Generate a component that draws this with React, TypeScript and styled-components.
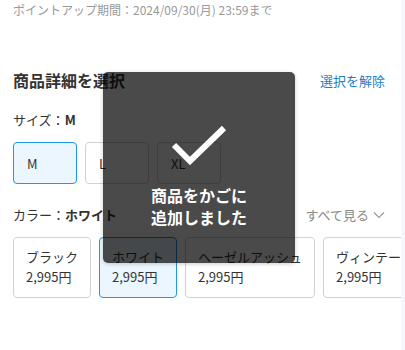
import React from "react";
import styled, { createGlobalStyle } from "styled-components";

const Global = createGlobalStyle`
  html, body { margin: 0; padding: 0; background: #fff; }
  body { font-family: "Noto Sans CJK JP", "Noto Sans", sans-serif; color: #333; }
  * { box-sizing: border-box; }
`;

const Page = styled.div`
  display: flex;
  width: 405px;
  height: 350px;
  overflow: hidden;
  position: relative;
`;

const Main = styled.div`
  flex: 1;
  min-width: 0;
  overflow: hidden;
  padding: 0 16px 0 13px;
`;

const Rail = styled.div`
  width: 4px;
  background: #f5f7fb;
`;

const Notice = styled.div`
  font-size: 12px;
  line-height: 20px;
  color: #999;
  white-space: nowrap;
`;

const HeaderRow = styled.div`
  display: flex;
  justify-content: space-between;
  align-items: center;
  margin-top: 49px;
  height: 22px;
`;

const Title = styled.h2`
  margin: 0;
  font-size: 16px;
  line-height: 22px;
  font-weight: 700;
  color: #333;
`;

const Link = styled.span`
  font-size: 13px;
  line-height: 20px;
  color: #1b7dc4;
  margin-top: 2px;
`;

const Label = styled.div<{ $mt: number }>`
  margin-top: ${(p) => p.$mt}px;
  font-size: 13px;
  line-height: 20px;
  color: #333;
  b { font-weight: 700; }
`;

const LabelRow = styled.div`
  display: flex;
  justify-content: space-between;
  align-items: center;
  margin-top: 21px;
  height: 20px;
`;

const SeeAll = styled.span`
  display: flex;
  align-items: center;
  gap: 4px;
  font-size: 13px;
  line-height: 20px;
  color: #888;
`;

const SizeRow = styled.div`
  display: flex;
  gap: 8px;
  margin-top: 12px;
`;

const SizeBtn = styled.div<{ $selected?: boolean }>`
  width: 64px;
  height: 42px;
  display: flex;
  align-items: center;
  padding-left: 13px;
  font-size: 13px;
  color: #333;
  border: 1px solid ${(p) => (p.$selected ? "#1c9be6" : "#d2d2d2")};
  background: ${(p) => (p.$selected ? "#ebf6fe" : "#fff")};
  border-radius: 4px;
`;

const CardRow = styled.div`
  display: flex;
  gap: 8px;
  margin-top: 12px;
`;

const Card = styled.div<{ $selected?: boolean }>`
  flex-shrink: 0;
  height: 61px;
  padding: 9px 12px 0 12px;
  border: 1px solid ${(p) => (p.$selected ? "#1c9be6" : "#d2d2d2")};
  background: ${(p) => (p.$selected ? "#ebf6fe" : "#fff")};
  border-radius: 4px;
  font-size: 13px;
  line-height: 20px;
  color: #333;
  white-space: nowrap;
`;

const Toast = styled.div`
  position: absolute;
  left: 103px;
  top: 72px;
  width: 192px;
  height: 191px;
  background: rgba(0, 0, 0, 0.71);
  border-radius: 5px;
  box-shadow: 0 1px 4px rgba(0, 0, 0, 0.2);
  display: flex;
  flex-direction: column;
  align-items: center;
  padding-top: 53px;
`;

const ToastText = styled.div`
  margin-top: 19px;
  color: #fff;
  font-weight: 700;
  font-size: 16px;
  line-height: 22px;
  text-align: center;
`;

const colors = [
  { name: "ブラック", price: "2,995円" },
  { name: "ホワイト", price: "2,995円", selected: true },
  { name: "ヘーゼルアッシュ", price: "2,995円" },
  { name: "ヴィンテージ", price: "2,995円" },
];

export default function App() {
  return (
    <>
      <Global />
      <Page>
        <Main>
          <Notice>ポイントアップ期間：2024/09/30(月) 23:59まで</Notice>
          <HeaderRow>
            <Title>商品詳細を選択</Title>
            <Link>選択を解除</Link>
          </HeaderRow>
          <Label $mt={19}>
            サイズ：<b>M</b>
          </Label>
          <SizeRow>
            <SizeBtn $selected>M</SizeBtn>
            <SizeBtn>L</SizeBtn>
            <SizeBtn>XL</SizeBtn>
          </SizeRow>
          <LabelRow>
            <Label $mt={0}>
              カラー：<b>ホワイト</b>
            </Label>
            <SeeAll>
              すべて見る
              <svg width="12" height="8" viewBox="0 0 12 8">
                <path d="M1 1.5 L6 6.5 L11 1.5" fill="none" stroke="#999" strokeWidth="1.2" />
              </svg>
            </SeeAll>
          </LabelRow>
          <CardRow>
            {colors.map((c) => (
              <Card key={c.name} $selected={c.selected}>
                <div>{c.name}</div>
                <div>{c.price}</div>
              </Card>
            ))}
          </CardRow>
        </Main>
        <Rail />
        <Toast>
          <svg width="56" height="40" viewBox="0 0 56 40">
            <path d="M3 20 L19 36 L53 3" fill="none" stroke="#fff" strokeWidth="6" />
          </svg>
          <ToastText>
            商品をかごに
            <br />
            追加しました
          </ToastText>
        </Toast>
      </Page>
    </>
  );
}
